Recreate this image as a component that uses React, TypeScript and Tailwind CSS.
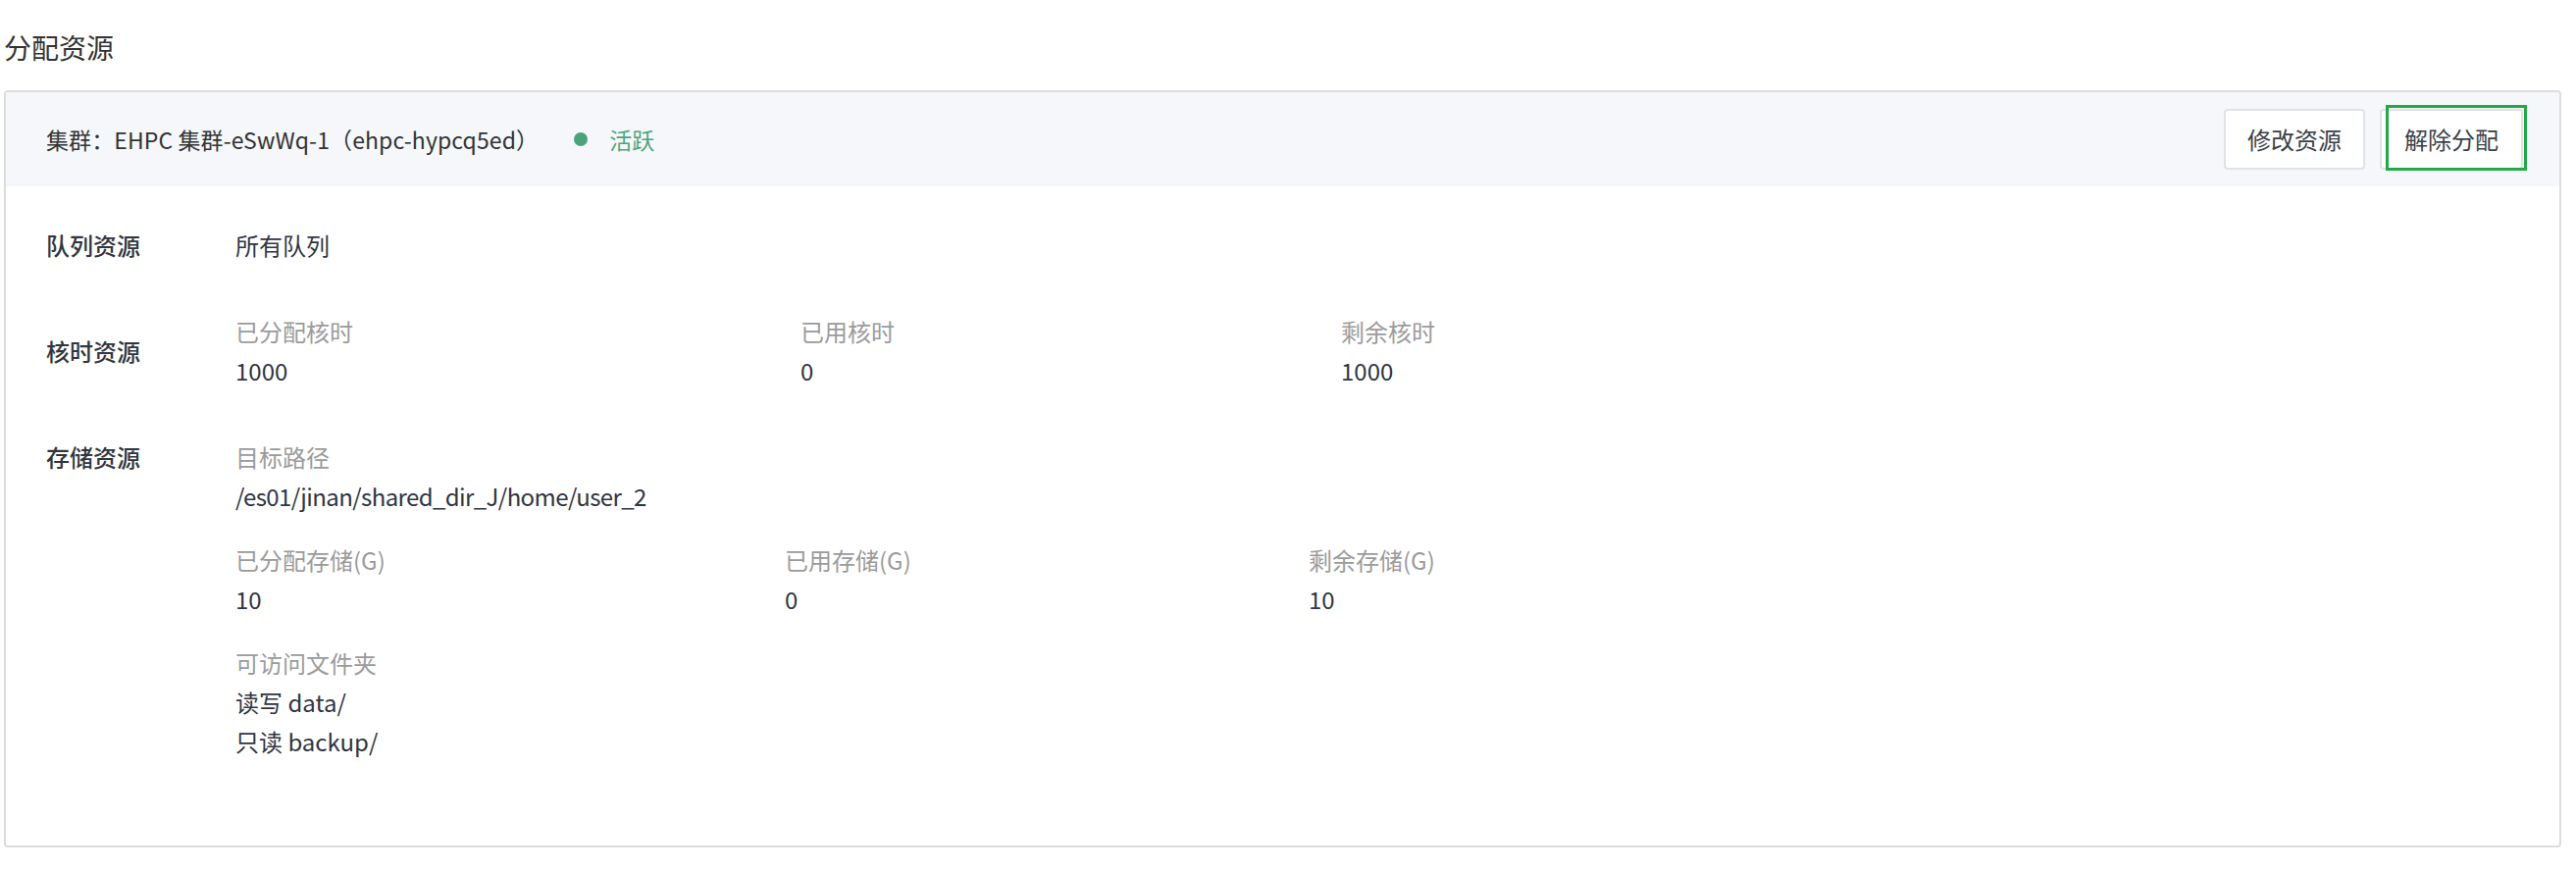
import React from 'react';

type Field = {
    label: string;
    value: string;
    width: string;
};

const CORE_FIELDS: Field[] = [
    { label: '已分配核时', value: '1000', width: 'w-[576px]' },
    { label: '已用核时', value: '0', width: 'w-[551px]' },
    { label: '剩余核时', value: '1000', width: 'w-[300px]' },
];

const STORAGE_FIELDS: Field[] = [
    { label: '已分配存储(G)', value: '10', width: 'w-[560px]' },
    { label: '已用存储(G)', value: '0', width: 'w-[534px]' },
    { label: '剩余存储(G)', value: '10', width: 'w-[300px]' },
];

function FieldCell({ field }: { field: Field }) {
    return (
        <div className={`${field.width} shrink-0`}>
            <div className="text-[#9b9b9b]">{field.label}</div>
            <div className="text-[#2f3542]">{field.value}</div>
        </div>
    );
}

export default function App() {
    return (
        <div
            className="h-[886px] w-[2626px] bg-white pt-[28px] text-[24px] leading-[40px] text-[#303133]"
            style={{ fontFamily: '"Noto Sans CJK SC", "Noto Sans", sans-serif' }}
        >
            <h2 className="pl-[4px] text-[28px] leading-[40px] font-normal text-[#333]">分配资源</h2>

            <div className="mt-[24px] ml-[4px] w-[2607px] overflow-hidden rounded-[4px] border-2 border-[#dcdcdc]">
                {/* header */}
                <div className="flex h-[96px] items-center justify-between bg-[#f5f7fa] pr-[37px] pl-[41px]">
                    <div className="flex items-center text-[23px] text-[#333]">
                        <span className="tracking-[0.1px]">集群：EHPC 集群-eSwWq-1（ehpc-hypcq5ed）</span>
                        <span className="ml-[36px] h-[14px] w-[14px] rounded-full bg-[#4aa37a]" />
                        <span className="ml-[22px] text-[#4ea47c]">活跃</span>
                    </div>
                    <div className="flex items-center gap-[15px]">
                        <button className="h-[62px] w-[144px] rounded-[4px] border-2 border-[#dfe2e7] bg-white text-[24px] text-[#3a3f47]">
                            修改资源
                        </button>
                        <div className="relative">
                            <button className="h-[62px] w-[146px] rounded-[4px] border-2 border-[#dfe2e7] bg-white text-[24px] text-[#3a3f47]">
                                解除分配
                            </button>
                            <span className="pointer-events-none absolute top-[-4px] left-[6px] h-[67px] w-[144px] border-[3px] border-[#22a845]" />
                        </div>
                    </div>
                </div>

                {/* body */}
                <div className="flex flex-col gap-[48px] pt-[40px] pb-[86px] pl-[41px]">
                    <div className="flex items-center">
                        <div className="w-[193px] shrink-0 font-medium text-[#303640]">队列资源</div>
                        <div className="text-[#2f3542]">所有队列</div>
                    </div>

                    <div className="flex items-center">
                        <div className="w-[193px] shrink-0 font-medium text-[#303640]">核时资源</div>
                        <div className="flex">
                            {CORE_FIELDS.map((f) => (
                                <FieldCell key={f.label} field={f} />
                            ))}
                        </div>
                    </div>

                    <div className="flex items-start">
                        <div className="w-[193px] shrink-0 font-medium text-[#303640]">存储资源</div>
                        <div className="flex flex-col gap-[25px]">
                            <div>
                                <div className="text-[#9b9b9b]">目标路径</div>
                                <div className="tracking-[-0.6px] text-[#2f3542]">/es01/jinan/shared_dir_J/home/user_2</div>
                            </div>
                            <div className="flex">
                                {STORAGE_FIELDS.map((f) => (
                                    <FieldCell key={f.label} field={f} />
                                ))}
                            </div>
                            <div>
                                <div className="text-[#9b9b9b]">可访问文件夹</div>
                                <div className="text-[#2f3542]">读写 data/</div>
                                <div className="text-[#2f3542]">只读 backup/</div>
                            </div>
                        </div>
                    </div>
                </div>
            </div>
        </div>
    );
}
